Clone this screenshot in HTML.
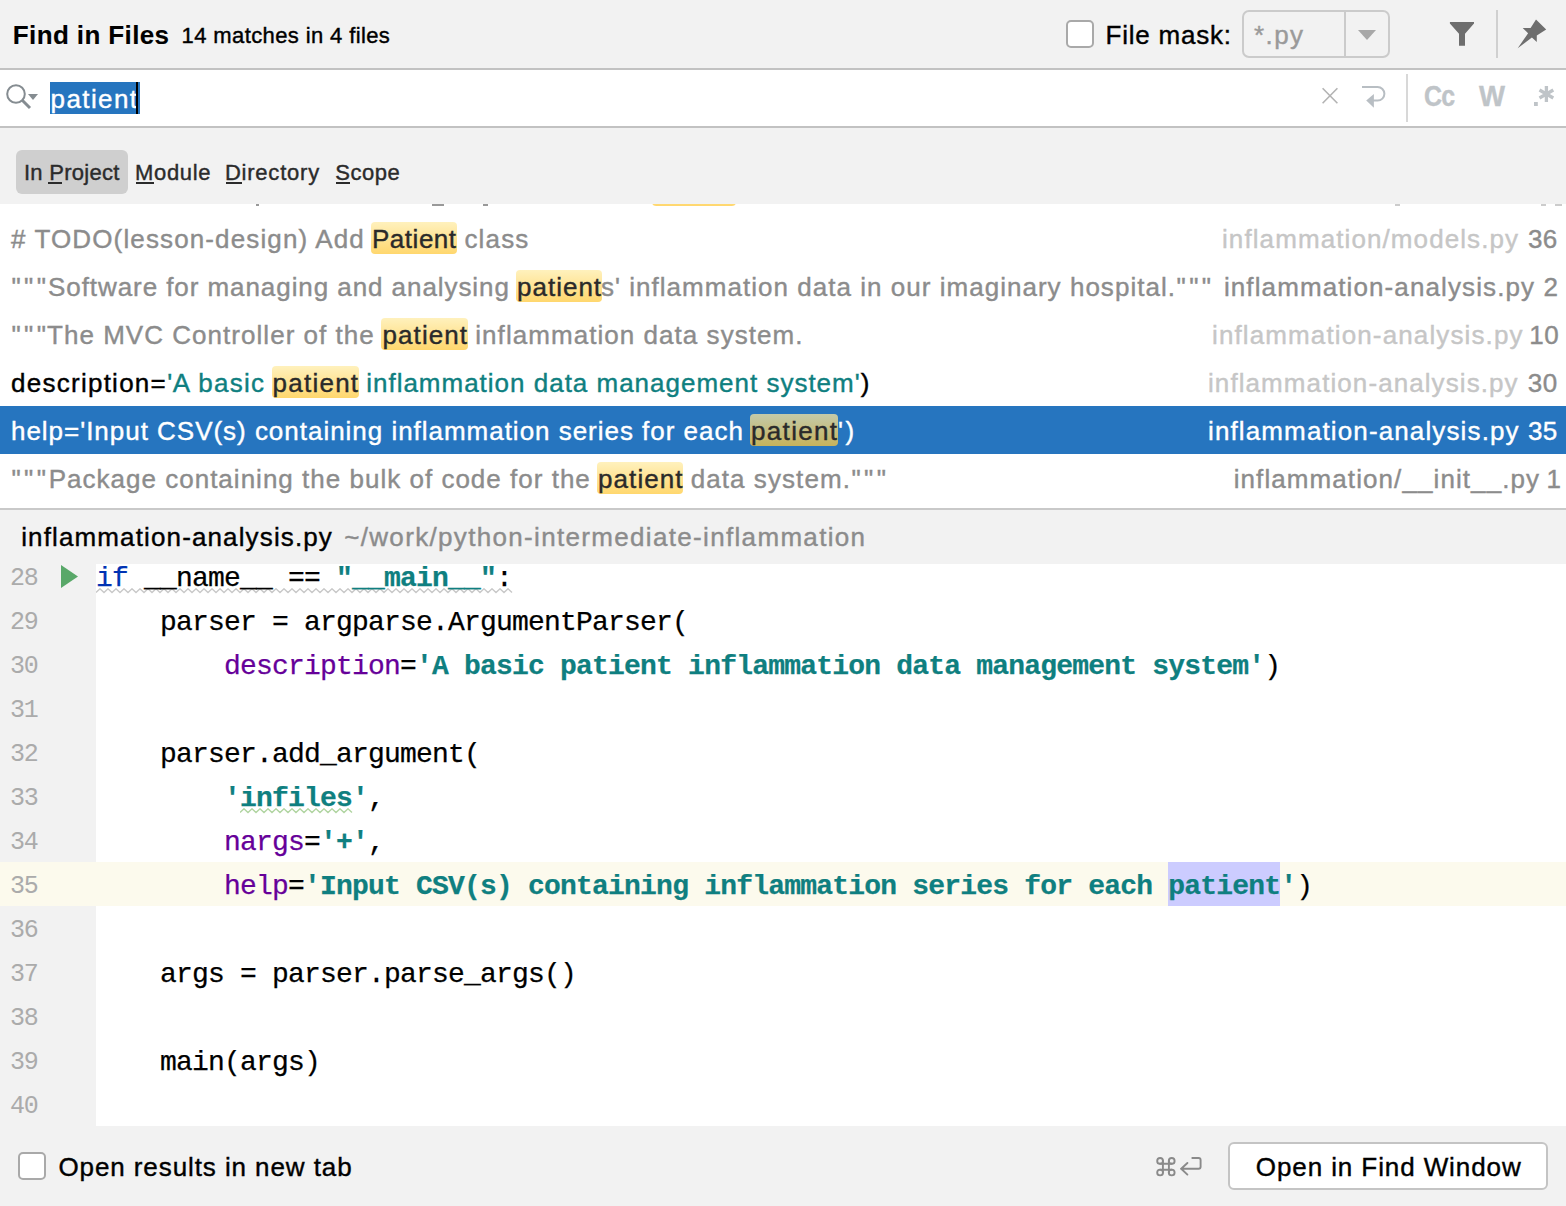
<!DOCTYPE html>
<html><head><meta charset="utf-8">
<style>
html,body{margin:0;padding:0;}
body{width:1566px;height:1206px;position:relative;overflow:hidden;background:#f2f2f2;font-family:"Liberation Sans",sans-serif;}
.a{position:absolute;}
.t{position:absolute;white-space:pre;-webkit-text-stroke:0.4px currentColor;}
.hl{position:absolute;background:linear-gradient(#fff1bd,#ffd76e);border-radius:4px;}
.hl2{position:absolute;background:linear-gradient(#c4caa9,#c6b35c);border-radius:4px;}
.cl{position:absolute;left:96px;white-space:pre;font-family:"Liberation Mono",monospace;font-size:28px;letter-spacing:-0.8px;line-height:44px;color:#000;-webkit-text-stroke:0.25px currentColor;}
.ln{position:absolute;left:10px;white-space:pre;font-family:"Liberation Mono",monospace;font-size:25px;letter-spacing:-1.2px;line-height:44px;color:#ababab;}
.s{color:#0f7f80;font-weight:bold;}
.k{color:#0033b3;}
.p{color:#660099;}
</style></head><body>
<!-- header -->
<div class="a" style="left:1066px;top:20px;width:24px;height:24px;border:2px solid #a9a9a9;border-radius:5px;background:#fff"></div>
<div class="a" style="left:1242px;top:10px;width:144px;height:44px;border:2px solid #cbcbcb;border-radius:7px;background:#f2f2f2"></div>
<div class="a" style="left:1344px;top:11px;width:2px;height:46px;background:#cbcbcb"></div>
<svg class="a" style="left:1356px;top:28px" width="22" height="14"><path d="M2 2 L20 2 L11 12 Z" fill="#a8a8a8"/></svg>
<svg class="a" style="left:1447px;top:20px" width="30" height="28"><path d="M2.9 2 H27 V3.4 L18 13.7 V25.8 H12 V13.7 L2.9 3.4 Z" fill="#6e6e6e"/></svg>
<div class="a" style="left:1496px;top:10px;width:2px;height:48px;background:#d0d0d0"></div>
<svg class="a" style="left:1515px;top:18px" width="34" height="32"><path d="M21 1.6 L31.2 11.4 L21.8 17.4 L21.8 24 L16.9 19.5 L2.7 30.2 L13.1 15.3 L7.7 9.9 L15.6 9.9 Z" fill="#6e6e6e"/></svg>
<!-- search row -->
<div class="a" style="left:0;top:68px;width:1566px;height:2px;background:#c2c2c2"></div>
<div class="a" style="left:0;top:70px;width:1566px;height:56px;background:#fff"></div>
<div class="a" style="left:0;top:126px;width:1566px;height:2px;background:#c2c2c2"></div>
<svg class="a" style="left:4px;top:82px" width="40" height="30"><circle cx="12" cy="12" r="8.8" fill="none" stroke="#858c91" stroke-width="2"/><path d="M18 18 L26 26" stroke="#858c91" stroke-width="3"/><path d="M24 12 L34 12 L29 18 Z" fill="#858c91"/></svg>
<div class="a" style="left:50px;top:82px;width:90px;height:32px;background:#2675bf"></div>
<svg class="a" style="left:1318px;top:85px" width="24" height="24"><path d="M4.6 3.3 L19.4 18.3 M19.4 3.3 L4.6 18.3" stroke="#b3b3b3" stroke-width="1.6"/></svg>
<svg class="a" style="left:1360px;top:84px" width="30" height="28"><path d="M2 3 H17.6 A6.8 6.8 0 0 1 17.6 16.6 H13" fill="none" stroke="#b8bec3" stroke-width="2"/><path d="M6.2 16.6 L13.9 10.1 L13.9 23.7 Z" fill="#b8bec3"/></svg>
<div class="a" style="left:1406px;top:74px;width:2px;height:48px;background:#d8d8d8"></div>
<div class="t" style="left:1424px;top:81.7px;font-size:29px;line-height:29px;font-weight:bold;color:#bfc4c8;letter-spacing:-1px;transform:scaleX(0.86);transform-origin:0 0">Cc</div>
<div class="t" style="left:1479px;top:81.7px;font-size:29px;line-height:29px;font-weight:bold;color:#bfc4c8;transform:scaleX(0.95);transform-origin:0 0">W</div>
<svg class="a" style="left:1530px;top:82px" width="30" height="28"><rect x="4" y="20" width="3.8" height="4" fill="#bfc4c8"/><path d="M16.4 4 V20 M9.5 8 L23.3 16 M9.5 16 L23.3 8" stroke="#bfc4c8" stroke-width="3.3"/></svg>
<!-- scope bar -->
<div class="a" style="left:16px;top:150px;width:112px;height:44px;background:#cfcfcf;border-radius:6px"></div>
<div class="a" style="left:48px;top:182px;width:14px;height:2px;background:#2b2b2b"></div>
<div class="a" style="left:136px;top:182px;width:18px;height:2px;background:#2b2b2b"></div>
<div class="a" style="left:226px;top:182px;width:16px;height:2px;background:#2b2b2b"></div>
<div class="a" style="left:336px;top:182px;width:14px;height:2px;background:#2b2b2b"></div>
<!-- results -->
<div class="a" style="left:0;top:204px;width:1566px;height:304px;background:#fff"></div>
<div class="a" style="left:0;top:406px;width:1566px;height:48px;background:#2675bf"></div>
<div class="a" style="left:256px;top:204px;width:3px;height:1.5px;background:#999"></div>
<div class="a" style="left:432px;top:204px;width:12px;height:1.5px;background:#999"></div>
<div class="a" style="left:483px;top:204px;width:5px;height:1.5px;background:#999"></div>
<div class="a" style="left:1395px;top:204px;width:5px;height:1.5px;background:#ccc"></div>
<div class="a" style="left:1541px;top:204px;width:5px;height:1.5px;background:#ccc"></div>
<div class="a" style="left:1555px;top:204px;width:7px;height:1.5px;background:#ccc"></div>
<div class="hl" style="left:652px;top:174px;width:84px;height:32px;clip-path:inset(30px 0 0 0)"></div>
<div class="hl" style="left:370.7px;top:222px;width:86.30000000000001px;height:32px"></div>
<div class="hl" style="left:515.8px;top:270px;width:86.20000000000005px;height:32px"></div>
<div class="hl" style="left:381.4px;top:318px;width:86.60000000000002px;height:32px"></div>
<div class="hl" style="left:271.5px;top:366px;width:87.5px;height:32px"></div>
<div class="hl2" style="left:750.3px;top:414px;width:87.70000000000005px;height:32px"></div>
<div class="hl" style="left:597px;top:462px;width:86.39999999999998px;height:32px"></div>
<div class="a" style="left:0;top:508px;width:1566px;height:2px;background:#c9c9c9"></div>
<!-- code -->
<div class="a" style="left:96px;top:564px;width:1470px;height:562px;background:#fff"></div>
<div class="a" style="left:0;top:862px;width:1566px;height:44px;background:#fcfaed"></div>
<div class="a" style="left:1168px;top:862px;width:112px;height:44px;background:#ccccff"></div>
<svg class="a" style="left:60px;top:564px" width="20" height="25"><path d="M1 1 L18 12.5 L1 24 Z" fill="#59a869"/></svg>

<svg class="a" style="left:96px;top:588px" width="418" height="6"><path d="M0 4.5 L4 0.8 L8 4.5 L12 0.8 L16 4.5 L20 0.8 L24 4.5 L28 0.8 L32 4.5 L36 0.8 L40 4.5 L44 0.8 L48 4.5 L52 0.8 L56 4.5 L60 0.8 L64 4.5 L68 0.8 L72 4.5 L76 0.8 L80 4.5 L84 0.8 L88 4.5 L92 0.8 L96 4.5 L100 0.8 L104 4.5 L108 0.8 L112 4.5 L116 0.8 L120 4.5 L124 0.8 L128 4.5 L132 0.8 L136 4.5 L140 0.8 L144 4.5 L148 0.8 L152 4.5 L156 0.8 L160 4.5 L164 0.8 L168 4.5 L172 0.8 L176 4.5 L180 0.8 L184 4.5 L188 0.8 L192 4.5 L196 0.8 L200 4.5 L204 0.8 L208 4.5 L212 0.8 L216 4.5 L220 0.8 L224 4.5 L228 0.8 L232 4.5 L236 0.8 L240 4.5 L244 0.8 L248 4.5 L252 0.8 L256 4.5 L260 0.8 L264 4.5 L268 0.8 L272 4.5 L276 0.8 L280 4.5 L284 0.8 L288 4.5 L292 0.8 L296 4.5 L300 0.8 L304 4.5 L308 0.8 L312 4.5 L316 0.8 L320 4.5 L324 0.8 L328 4.5 L332 0.8 L336 4.5 L340 0.8 L344 4.5 L348 0.8 L352 4.5 L356 0.8 L360 4.5 L364 0.8 L368 4.5 L372 0.8 L376 4.5 L380 0.8 L384 4.5 L388 0.8 L392 4.5 L396 0.8 L400 4.5 L404 0.8 L408 4.5 L412 0.8 L416 4.5" fill="none" stroke="#c8c8c8" stroke-width="1.4"/></svg>
<svg class="a" style="left:240px;top:808px" width="114" height="6"><path d="M0 4.5 L4 0.8 L8 4.5 L12 0.8 L16 4.5 L20 0.8 L24 4.5 L28 0.8 L32 4.5 L36 0.8 L40 4.5 L44 0.8 L48 4.5 L52 0.8 L56 4.5 L60 0.8 L64 4.5 L68 0.8 L72 4.5 L76 0.8 L80 4.5 L84 0.8 L88 4.5 L92 0.8 L96 4.5 L100 0.8 L104 4.5 L108 0.8 L112 4.5" fill="none" stroke="#b0d4a0" stroke-width="1.4"/></svg>
<div id="code">
<div class="ln" style="top:557.33px">28</div><div class="cl" style="top:556.53px"><span class="k">if</span> __name__ == <span class="s">"__main__"</span>:</div>
<div class="ln" style="top:601.33px">29</div><div class="cl" style="top:600.53px">    parser = argparse.ArgumentParser(</div>
<div class="ln" style="top:645.33px">30</div><div class="cl" style="top:644.53px">        <span class="p">description</span>=<span class="s">'A basic patient inflammation data management system'</span>)</div>
<div class="ln" style="top:689.33px">31</div>
<div class="ln" style="top:733.33px">32</div><div class="cl" style="top:732.53px">    parser.add_argument(</div>
<div class="ln" style="top:777.33px">33</div><div class="cl" style="top:776.53px">        <span class="s">'infiles'</span>,</div>
<div class="ln" style="top:821.33px">34</div><div class="cl" style="top:820.53px">        <span class="p">nargs</span>=<span class="s">'+'</span>,</div>
<div class="ln" style="top:865.33px">35</div><div class="cl" style="top:864.53px">        <span class="p">help</span>=<span class="s">'Input CSV(s) containing inflammation series for each patient'</span>)</div>
<div class="ln" style="top:909.33px">36</div>
<div class="ln" style="top:953.33px">37</div><div class="cl" style="top:952.53px">    args = parser.parse_args()</div>
<div class="ln" style="top:997.33px">38</div>
<div class="ln" style="top:1041.33px">39</div><div class="cl" style="top:1040.53px">    main(args)</div>
<div class="ln" style="top:1085.33px">40</div>
</div>
<!-- footer -->
<div class="a" style="left:18px;top:1152px;width:24px;height:24px;border:2px solid #a9a9a9;border-radius:5px;background:#fff"></div>
<div class="a" style="left:1228px;top:1142px;width:316px;height:44px;border:2px solid #c4c4c4;border-radius:6px;background:#fff"></div>
<div class="t" style="left:12.8px;top:22.0px;font-size:26px;line-height:26px;letter-spacing:0.384px;color:#000;font-weight:700;-webkit-text-stroke:0.1px currentColor;">Find in Files</div>
<div class="t" style="left:181.6px;top:25.0px;font-size:22px;line-height:22px;letter-spacing:0.386px;color:#000;">14 matches in 4 files</div>
<div class="t" style="left:1105.5px;top:21.7px;font-size:26px;line-height:26px;letter-spacing:0.790px;color:#000;">File mask:</div>
<div class="t" style="left:1254.0px;top:21.7px;font-size:26px;line-height:26px;letter-spacing:1.422px;color:#9a9a9a;">*.py</div>
<div class="t" style="left:50.5px;top:86.0px;font-size:26px;line-height:26px;letter-spacing:1.417px;color:#fff;">patient</div>
<div class="t" style="left:23.9px;top:161.8px;font-size:22px;line-height:22px;letter-spacing:0.291px;color:#2b2b2b;">In Project</div>
<div class="t" style="left:135.1px;top:161.8px;font-size:22px;line-height:22px;letter-spacing:0.661px;color:#2b2b2b;">Module</div>
<div class="t" style="left:224.9px;top:161.8px;font-size:22px;line-height:22px;letter-spacing:0.781px;color:#2b2b2b;">Directory</div>
<div class="t" style="left:335.3px;top:161.8px;font-size:22px;line-height:22px;letter-spacing:0.492px;color:#2b2b2b;">Scope</div>
<div class="t" style="left:11.0px;top:226.0px;font-size:26px;line-height:26px;letter-spacing:1.128px;color:#8c8c8c;"># TODO(lesson-design) Add </div>
<div class="t" style="left:372.0px;top:226.0px;font-size:26px;line-height:26px;letter-spacing:0.521px;color:#2a2a2a;">Patient</div>
<div class="t" style="left:456.0px;top:226.0px;font-size:26px;line-height:26px;letter-spacing:1.182px;color:#8c8c8c;"> class</div>
<div class="t" style="left:11.6px;top:274.0px;font-size:26px;line-height:26px;letter-spacing:3.288px;color:#8c8c8c;">&quot;&quot;&quot;</div>
<div class="t" style="left:48.0px;top:274.0px;font-size:26px;line-height:26px;letter-spacing:0.931px;color:#8c8c8c;">Software for managing and analysing </div>
<div class="t" style="left:517.0px;top:274.0px;font-size:26px;line-height:26px;letter-spacing:1.000px;color:#2a2a2a;">patient</div>
<div class="t" style="left:601.0px;top:274.0px;font-size:26px;line-height:26px;letter-spacing:1.028px;color:#8c8c8c;">s&#x27; inflammation data in our imaginary hospital.</div>
<div class="t" style="left:1176.6px;top:274.0px;font-size:26px;line-height:26px;letter-spacing:3.388px;color:#8c8c8c;">&quot;&quot;&quot;</div>
<div class="t" style="left:11.6px;top:322.0px;font-size:26px;line-height:26px;letter-spacing:3.288px;color:#8c8c8c;">&quot;&quot;&quot;</div>
<div class="t" style="left:47.0px;top:322.0px;font-size:26px;line-height:26px;letter-spacing:1.034px;color:#8c8c8c;">The MVC Controller of the </div>
<div class="t" style="left:382.5px;top:322.0px;font-size:26px;line-height:26px;letter-spacing:1.084px;color:#2a2a2a;">patient</div>
<div class="t" style="left:467.0px;top:322.0px;font-size:26px;line-height:26px;letter-spacing:1.050px;color:#8c8c8c;"> inflammation data system.</div>
<div class="t" style="left:11.0px;top:370.0px;font-size:26px;line-height:26px;letter-spacing:1.260px;color:#000;">description=</div>
<div class="t" style="left:167.3px;top:370.0px;font-size:26px;line-height:26px;letter-spacing:0.400px;color:#0f7f80;">&#x27;</div>
<div class="t" style="left:172.7px;top:370.0px;font-size:26px;line-height:26px;letter-spacing:1.260px;color:#0f7f80;">A basic </div>
<div class="t" style="left:272.5px;top:370.0px;font-size:26px;line-height:26px;letter-spacing:1.250px;color:#2a2a2a;">patient</div>
<div class="t" style="left:358.0px;top:370.0px;font-size:26px;line-height:26px;letter-spacing:0.992px;color:#0f7f80;"> inflammation data management system&#x27;</div>
<div class="t" style="left:860.8px;top:370.0px;font-size:26px;line-height:26px;letter-spacing:0.400px;color:#000;">)</div>
<div class="t" style="left:11.0px;top:418.0px;font-size:26px;line-height:26px;letter-spacing:0.976px;color:#fff;">help=&#x27;Input CSV(s) containing inflammation series for each </div>
<div class="t" style="left:751.0px;top:418.0px;font-size:26px;line-height:26px;letter-spacing:1.334px;color:#2a2a2a;">patient</div>
<div class="t" style="left:838.0px;top:418.0px;font-size:26px;line-height:26px;letter-spacing:0.400px;color:#fff;">&#x27;</div>
<div class="t" style="left:845.6px;top:418.0px;font-size:26px;line-height:26px;letter-spacing:0.400px;color:#fff;">)</div>
<div class="t" style="left:11.6px;top:466.0px;font-size:26px;line-height:26px;letter-spacing:3.288px;color:#8c8c8c;">&quot;&quot;&quot;</div>
<div class="t" style="left:48.7px;top:466.0px;font-size:26px;line-height:26px;letter-spacing:1.011px;color:#8c8c8c;">Package containing the bulk of code for the </div>
<div class="t" style="left:598.0px;top:466.0px;font-size:26px;line-height:26px;letter-spacing:1.084px;color:#2a2a2a;">patient</div>
<div class="t" style="left:682.4px;top:466.0px;font-size:26px;line-height:26px;letter-spacing:1.071px;color:#8c8c8c;"> data system.</div>
<div class="t" style="left:851.4px;top:466.0px;font-size:26px;line-height:26px;letter-spacing:3.388px;color:#8c8c8c;">&quot;&quot;&quot;</div>
<div class="t" style="left:1222.0px;top:226.0px;font-size:26px;line-height:26px;letter-spacing:1.093px;color:#c6c6c6;">inflammation/models.py</div>
<div class="t" style="left:1528.0px;top:226.0px;font-size:26px;line-height:26px;letter-spacing:0.400px;color:#8c8c8c;">36</div>
<div class="t" style="left:1223.9px;top:274.0px;font-size:26px;line-height:26px;letter-spacing:1.109px;color:#8c8c8c;">inflammation-analysis.py</div>
<div class="t" style="left:1543.6px;top:274.0px;font-size:26px;line-height:26px;letter-spacing:0.400px;color:#8c8c8c;">2</div>
<div class="t" style="left:1212.0px;top:322.0px;font-size:26px;line-height:26px;letter-spacing:1.122px;color:#c6c6c6;">inflammation-analysis.py</div>
<div class="t" style="left:1529.3px;top:322.0px;font-size:26px;line-height:26px;letter-spacing:0.400px;color:#8c8c8c;">10</div>
<div class="t" style="left:1208.0px;top:370.0px;font-size:26px;line-height:26px;letter-spacing:1.083px;color:#c6c6c6;">inflammation-analysis.py</div>
<div class="t" style="left:1527.8px;top:370.0px;font-size:26px;line-height:26px;letter-spacing:0.400px;color:#8c8c8c;">30</div>
<div class="t" style="left:1208.0px;top:418.0px;font-size:26px;line-height:26px;letter-spacing:1.126px;color:#fff;">inflammation-analysis.py</div>
<div class="t" style="left:1528.0px;top:418.0px;font-size:26px;line-height:26px;letter-spacing:0.400px;color:#fff;">35</div>
<div class="t" style="left:1233.7px;top:466.0px;font-size:26px;line-height:26px;letter-spacing:1.086px;color:#8c8c8c;">inflammation/__init__.py</div>
<div class="t" style="left:1546.5px;top:466.0px;font-size:26px;line-height:26px;letter-spacing:0.400px;color:#8c8c8c;">1</div>
<div class="t" style="left:21.2px;top:523.8px;font-size:26px;line-height:26px;letter-spacing:1.131px;color:#000;">inflammation-analysis.py</div>
<div class="t" style="left:344.2px;top:523.8px;font-size:26px;line-height:26px;letter-spacing:1.329px;color:#8c8c8c;">~/work/python-intermediate-inflammation</div>
<div class="t" style="left:58.4px;top:1153.5px;font-size:26px;line-height:26px;letter-spacing:0.915px;color:#000;">Open results in new tab</div>
<div class="t" style="left:1255.8px;top:1153.9px;font-size:26px;line-height:26px;letter-spacing:0.907px;color:#000;">Open in Find Window</div>
<svg class="a" style="left:1150px;top:1150px" width="56" height="32" fill="none" stroke="#8a8a8a" stroke-width="1.9" stroke-linecap="round" stroke-linejoin="round"><circle cx="10.1" cy="10.9" r="2.9"/><circle cx="21.7" cy="10.9" r="2.9"/><circle cx="10.1" cy="22.5" r="2.9"/><circle cx="21.7" cy="22.5" r="2.9"/><path d="M12.9 10.9 V22.5 M18.9 10.9 V22.5 M10.1 13.7 H21.7 M10.1 19.7 H21.7"/><path d="M42.3 8 H48.6 A2 2 0 0 1 50.6 10 V16.8 A2 2 0 0 1 48.6 18.8 H31 M37.4 13 L31.2 18.8 L37.4 24.6"/></svg>
<div class="a" style="left:136px;top:82px;width:2px;height:32px;background:#000"></div>
</body></html>
